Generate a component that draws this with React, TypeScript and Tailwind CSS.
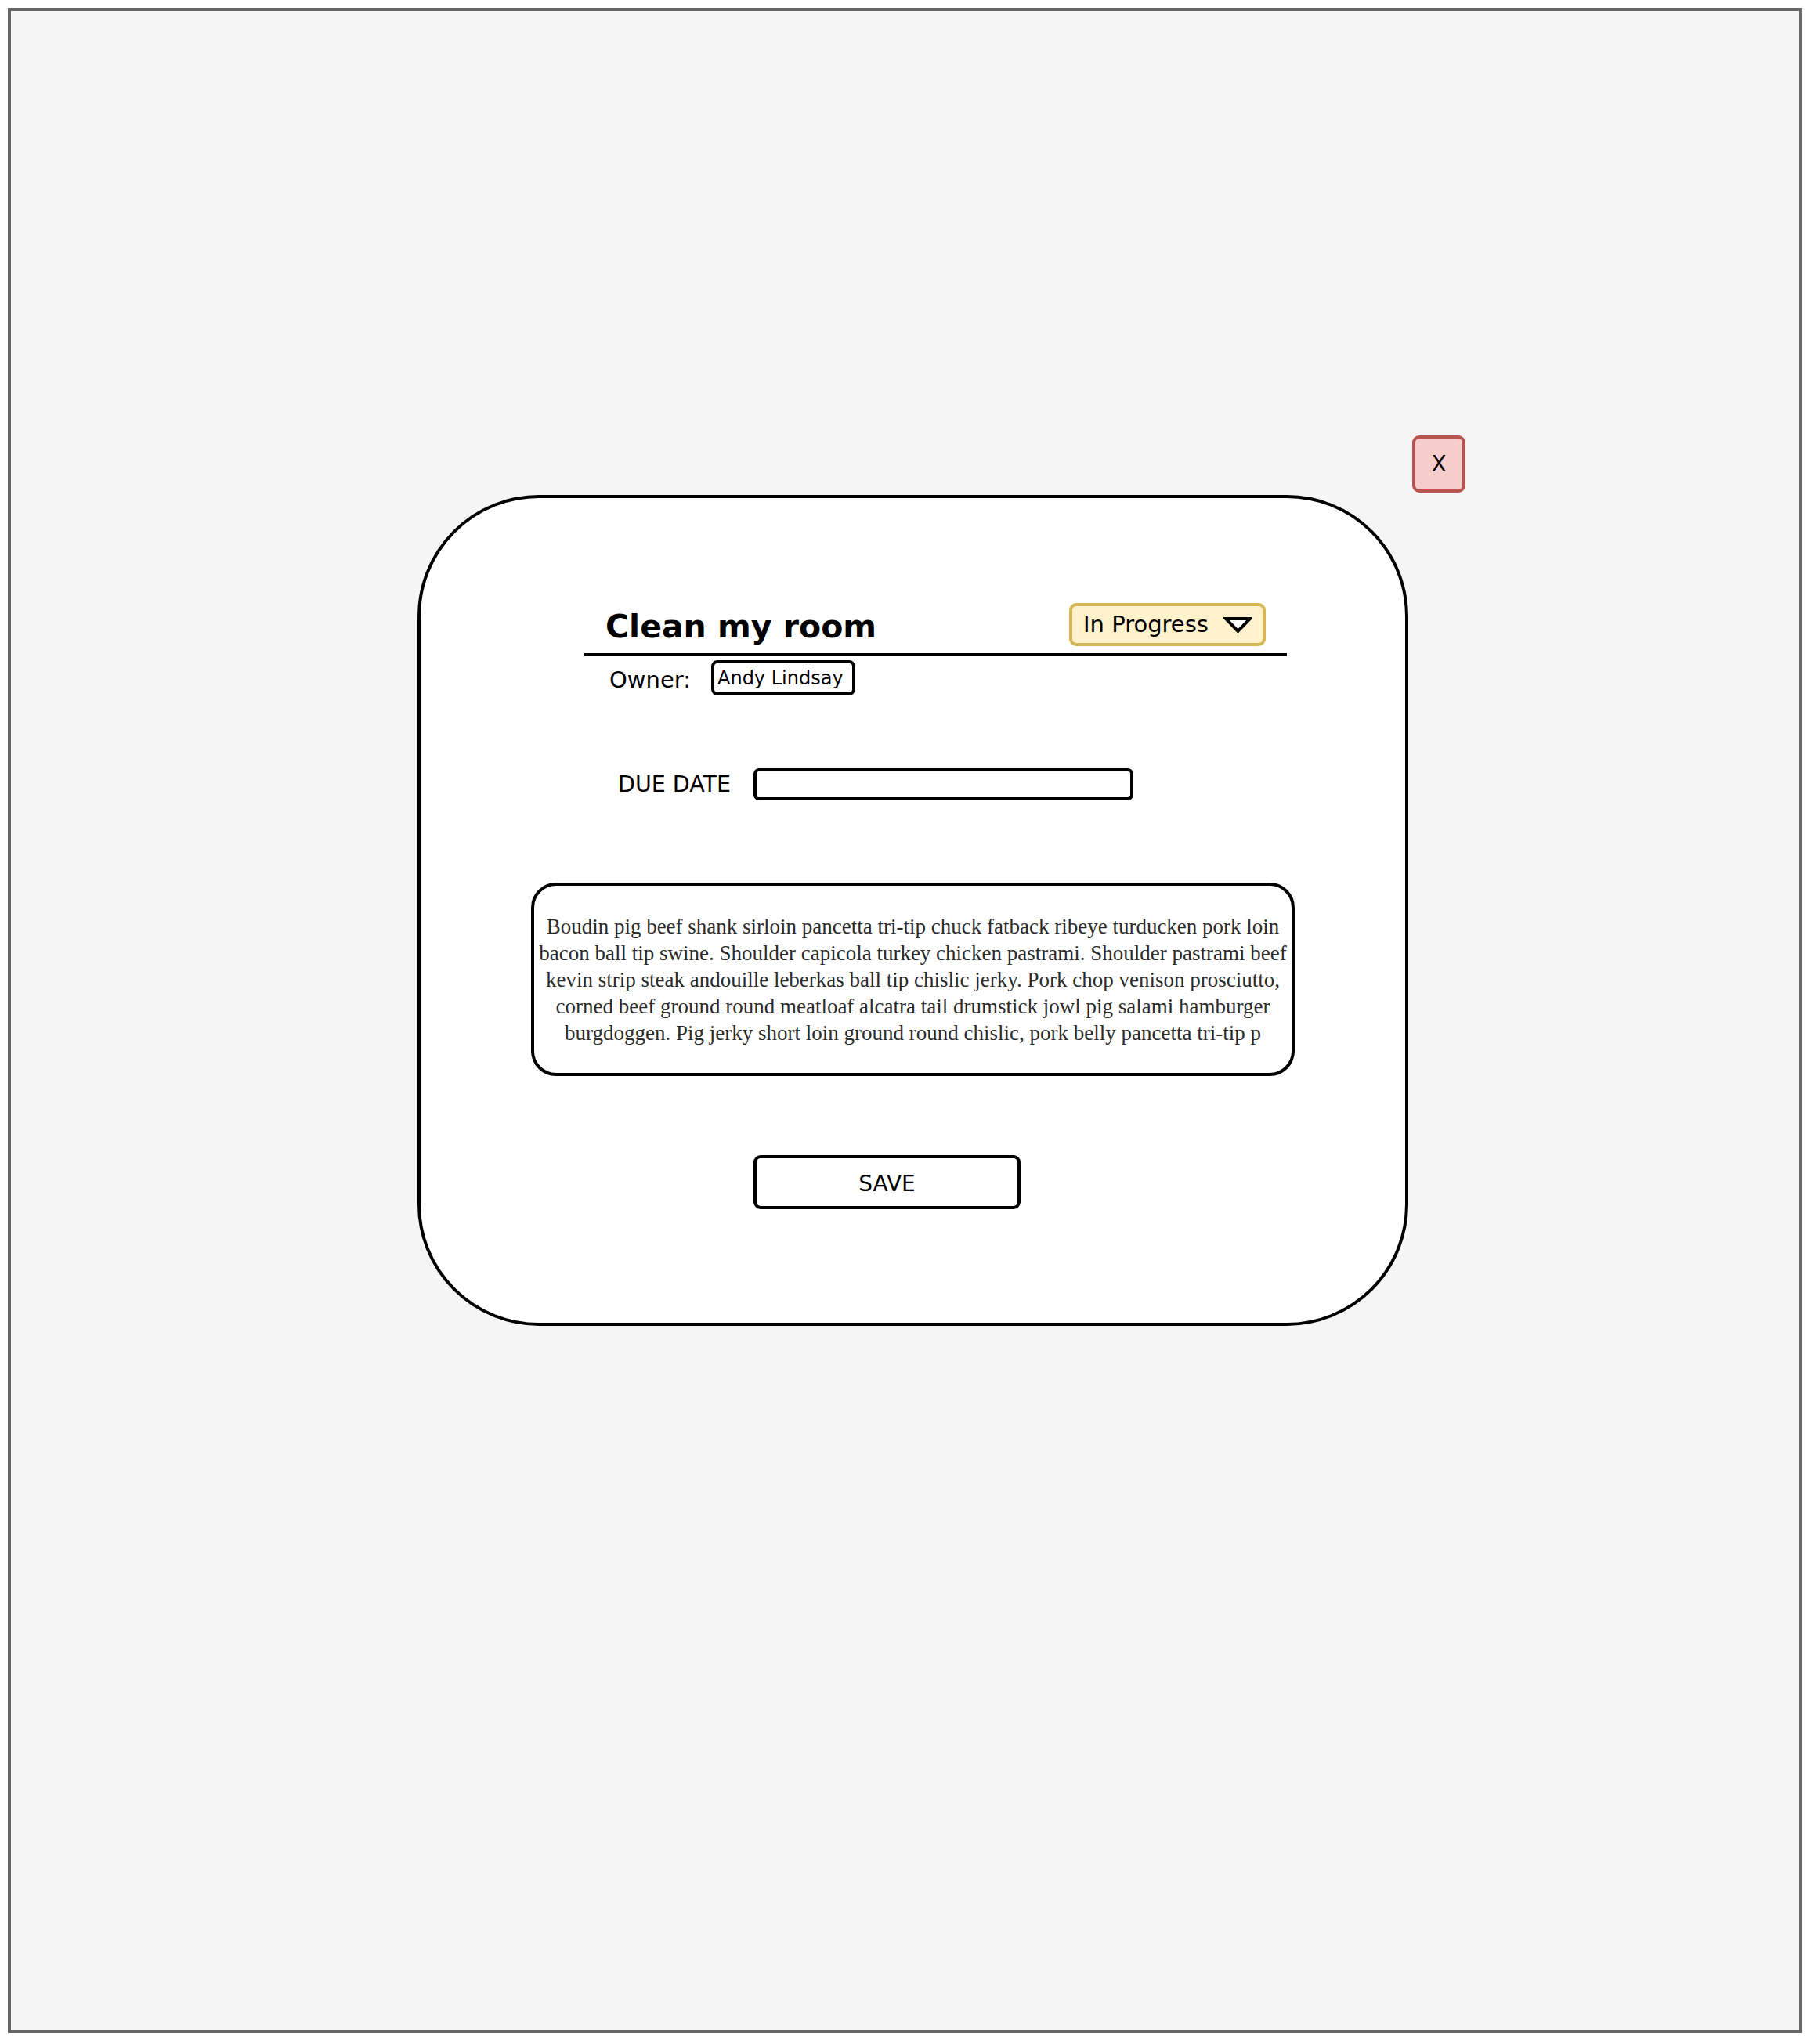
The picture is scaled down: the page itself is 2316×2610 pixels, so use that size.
import React from "react";

const sans = "font-['DejaVu_Sans',Verdana,sans-serif]";

const lines = [
  "Boudin pig beef shank sirloin pancetta tri-tip chuck fatback ribeye turducken pork loin",
  "bacon ball tip swine. Shoulder capicola turkey chicken pastrami. Shoulder pastrami beef",
  "kevin strip steak andouille leberkas ball tip chislic jerky. Pork chop venison prosciutto,",
  "corned beef ground round meatloaf alcatra tail drumstick jowl pig salami hamburger",
  "burgdoggen. Pig jerky short loin ground round chislic, pork belly pancetta tri-tip p",
];

export default function App() {
  return (
    <div className={`w-[2316px] h-[2610px] bg-white pt-[10px] pl-[10px] ${sans} text-black`}>
      <div className="w-[2291px] h-[2586px] border-[4px] border-[#666666] bg-[#f5f5f5]">
        <div className="ml-[519px] mt-[542px] flex flex-col">
          {/* close button */}
          <div className="ml-[1270px] w-[68px] h-[73px] border-[4px] border-[#b85450] bg-[#f8cecc] rounded-[9px] flex items-center justify-center text-[28px] leading-none">
            X
          </div>

          {/* modal */}
          <div className="mt-[3px] w-[1265px] h-[1061px] border-[4px] border-black rounded-[155px] bg-white flex flex-col">
            {/* header */}
            <div className="ml-[209px] mt-[134px] w-[897px] flex flex-col">
              <div className="flex items-end justify-between pl-[27px] pr-[27px]">
                <div className="text-[41px] font-bold leading-none mb-[4px]">Clean my room</div>
                <div className="w-[251px] h-[55px] border-[4px] border-[#d6b656] bg-[#fff2cc] rounded-[9px] flex items-center pl-[14px] pr-[13px]">
                  <span className="text-[29px] leading-none">In Progress</span>
                  <svg className="ml-auto" width="37" height="22" viewBox="0 0 37 22">
                    <path d="M3 3 L34 3 L18.5 19 Z" fill="#ffffff" stroke="#000000" strokeWidth="4" strokeLinejoin="miter" />
                  </svg>
                </div>
              </div>
              <div className="mt-[9px] h-[4px] bg-black" />
            </div>

            {/* owner */}
            <div className="ml-[241px] mt-[5px] flex items-center">
              <div className="w-[130px] text-[29px] leading-[34px] mt-[5px]">Owner:</div>
              <div className="w-[184px] h-[45px] border-[4px] border-black rounded-[8px] pl-[4px] flex items-center text-[24px] leading-none">
                Andy Lindsay
              </div>
            </div>

            {/* due date */}
            <div className="ml-[252px] mt-[93px] flex items-center">
              <div className="w-[173px] text-[28.5px] leading-[34px]">DUE DATE</div>
              <div className="w-[485px] h-[41px] border-[4px] border-black rounded-[7px]" />
            </div>

            {/* description */}
            <div className="ml-[141px] mt-[105px] w-[975px] h-[247px] border-[4px] border-black rounded-[32px] flex items-center justify-center">
              <div className="font-['Liberation_Serif',Georgia,serif] text-[27px] leading-[34px] text-[#2b2b2b] text-center whitespace-nowrap">
                {lines.map((l) => (
                  <div key={l}>{l}</div>
                ))}
              </div>
            </div>

            {/* save */}
            <div className="ml-[425px] mt-[101px] w-[341px] h-[69px] border-[4px] border-black rounded-[9px] flex items-center justify-center pt-[5px] text-[28px] leading-none">
              SAVE
            </div>
          </div>
        </div>
      </div>
    </div>
  );
}
